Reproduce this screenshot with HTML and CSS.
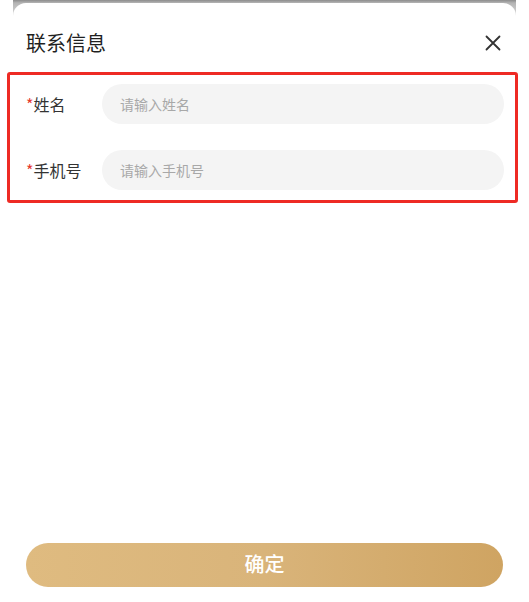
FILE: index.html
```html
<!DOCTYPE html>
<html lang="zh-CN">
<head>
<meta charset="utf-8">
<title>联系信息</title>
<link rel="stylesheet" href="styles.css">
</head>
<body>
<div class="page">
  <div class="edge"><div class="edge-cap"></div></div>
  <div class="header">
    <h1 class="title">联系信息</h1>
    <button class="close" aria-label="关闭">
      <svg width="16" height="16" viewBox="0 0 16 16"><path d="M1.5 1.5 L14.5 14.5 M14.5 1.5 L1.5 14.5" stroke="#333" stroke-width="1.8" stroke-linecap="round" fill="none"/></svg>
    </button>
  </div>
  <div class="form">
    <div class="row">
      <label class="label"><span class="req">*</span>姓名</label>
      <div class="input"><span class="ph">请输入姓名</span></div>
    </div>
    <div class="row">
      <label class="label"><span class="req">*</span>手机号</label>
      <div class="input"><span class="ph">请输入手机号</span></div>
    </div>
  </div>
  <div class="footer">
    <button class="confirm">确定</button>
  </div>
</div>
</body>
</html>
```
FILE: styles.css
```css
* { box-sizing: border-box; }
html, body { margin: 0; padding: 0; background: #fff; }
body {
  font-family: "Noto Sans CJK SC", "Noto Sans", sans-serif;
  color: #222;
}
.page {
  height: 602px;
  display: flex;
  flex-direction: column;
}
.edge {
  height: 16px;
  margin: 0 13px;
  background: linear-gradient(#8c8c8c, #b5b5b5 3px, #d8d8d8);
  flex: none;
}
.edge-cap {
  margin-top: 3px;
  height: 13px;
  background: #fff;
  border-radius: 13px 13px 0 0;
}
.header {
  height: 54px;
  display: flex;
  align-items: center;
  justify-content: space-between;
  padding: 0 28px 0 26px;
  flex: none;
}
.title {
  margin: 0;
  font-size: 20px;
  font-weight: 400;
  color: #1f1f1f;
  line-height: 1;
}
.close {
  border: 0;
  background: none;
  padding: 0;
  width: 16px;
  height: 16px;
  display: flex;
}
.form {
  margin: 2px 11px 0 7px;
  border: 3px solid #ee2a24;
  border-radius: 3px;
  padding: 9px 11px 10px 16px;
  display: flex;
  flex-direction: column;
  gap: 26px;
  flex: none;
}
.row {
  display: flex;
  align-items: center;
  height: 40px;
}
.label {
  width: 76px;
  flex: none;
  font-size: 16px;
  color: #333;
}
.req { color: #e53a30; }
.input {
  flex: 1;
  height: 40px;
  border-radius: 20px;
  background: #f4f4f4;
  display: flex;
  align-items: center;
  padding-left: 18px;
}
.ph {
  font-size: 14px;
  color: #a8a8a8;
}
.footer {
  margin-top: auto;
  padding: 0 26px 15px 26px;
}
.confirm {
  width: 100%;
  height: 44px;
  border: 0;
  border-radius: 22px;
  background: linear-gradient(90deg, #dfbb80, #d9b47a 50%, #cfa462);
  color: #fff;
  font-family: "Noto Sans CJK SC", sans-serif;
  font-size: 20px;
  font-weight: 500;
  padding: 0 0 3px 0;
  display: block;
}
```
